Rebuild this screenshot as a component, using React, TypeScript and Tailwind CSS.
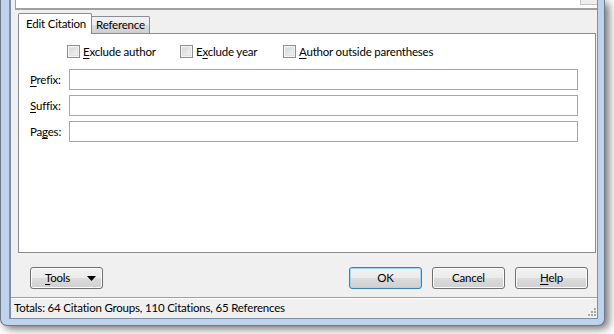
import React from "react";

const U = ({ children }: any) => <span className="underline underline-offset-[2px]">{children}</span>;

const CheckBox = ({ children, width }: any) => (
  <div className={`flex items-center gap-[3px] ${width}`}>
    <span className="w-[13px] h-[13px] shrink-0 border border-[#8e8f8f] bg-[linear-gradient(135deg,#d2d2d2,#f8f8f8)] shadow-[inset_0_0_0_1px_#f4f4f4,inset_0_0_0_2px_#e2e2e2]" />
    <span className="leading-[13px]">{children}</span>
  </div>
);

const Field = ({ children }: any) => (
  <div className="flex items-center h-[21px]">
    <span className="w-[39px] shrink-0">{children}</span>
    <div className="flex-1 h-[21px] mr-[17px] bg-white border border-[#a7a7a7]" />
  </div>
);

const grad = "bg-[linear-gradient(#f2f2f2,#ebebeb_50%,#dddddd_50%,#cfcfcf)]";

export default function App() {
  return (
    <div className="w-[614px] h-[334px] bg-white overflow-hidden font-['Lato',sans-serif] text-[11.5px] tracking-[-0.2px] text-black">
      <div className="w-[605px] h-[326px] border-x border-b border-[#6d7a88] rounded-b-[7px] bg-[#bfd4ec] pl-[8px] pr-[6px] pb-[6px] shadow-[4px_3px_9px_rgba(0,0,0,0.55)]">
        <div className="h-[319px] border-l-2 border-r border-b border-[#7f8fa2] bg-[#f0f0f0] flex flex-col">
          {/* bottom of control above */}
          <div className="h-[10px] ml-[4px] bg-white border-l border-b-2 border-[#a0a0a0] flex justify-end">
            <div className="w-[17px] h-[5px] bg-[#eeeeee] border-l border-b border-[#c4c4c4]" />
          </div>

          {/* tabs */}
          <div className="mt-[3px] h-[20px] ml-[7px] flex items-end">
            <div className="relative z-10 h-[21px] -mb-px w-[74px] pl-[7px] bg-white border-l border-t border-r border-[#898c95] rounded-t-[2px] flex items-center">
              Edit Citation
            </div>
            <div className={`h-[17px] w-[58px] pl-[4px] border-t border-r border-[#898c95] rounded-tr-[2px] ${grad} flex items-center`}>
              Reference
            </div>
          </div>

          {/* panel */}
          <div className="h-[220px] ml-[7px] mr-[1px] border border-[#898c95] bg-white flex flex-col pt-[11px] pl-[11px]">
            <div className="flex h-[13px] pl-[37px]">
              <CheckBox width="w-[113px]">
                <U>E</U>xclude author
              </CheckBox>
              <CheckBox width="w-[103px]">
                E<U>x</U>clude year
              </CheckBox>
              <CheckBox width="">
                <U>A</U>uthor outside parentheses
              </CheckBox>
            </div>
            <div className="mt-[11px] flex flex-col gap-[5px]">
              <Field>
                <U>P</U>refix:
              </Field>
              <Field>
                <U>S</U>uffix:
              </Field>
              <Field>
                Pa<U>g</U>es:
              </Field>
            </div>
          </div>

          {/* buttons */}
          <div className="mt-[14px] h-[22px] flex items-center pl-[19px] pr-[9px]">
            <div className={`h-[22px] w-[73px] rounded-[3px] border border-[#707070] shadow-[inset_0_0_0_1px_#fbfbfb] ${grad} flex items-center pl-[14px] pr-[6px]`}>
              <span className="flex-1">
                <U>T</U>ools
              </span>
              <svg width="9" height="5" viewBox="0 0 9 5">
                <path d="M0 0H9L4.5 5Z" fill="#000" />
              </svg>
            </div>
            <div className="flex-1" />
            <div className={`h-[22px] w-[73px] rounded-[3px] border border-[#3c7fb1] shadow-[inset_0_0_0_1px_#9fd9f7] ${grad} flex items-center justify-center`}>
              OK
            </div>
            <div className={`h-[22px] w-[73px] ml-[10px] rounded-[3px] border border-[#707070] shadow-[inset_0_0_0_1px_#fbfbfb] ${grad} flex items-center justify-center`}>
              Cancel
            </div>
            <div className={`h-[22px] w-[73px] ml-[10px] rounded-[3px] border border-[#707070] shadow-[inset_0_0_0_1px_#fbfbfb] ${grad} flex items-center justify-center`}>
              <span>
                <U>H</U>elp
              </span>
            </div>
          </div>

          {/* status bar */}
          <div className="mt-[8px] flex-1 border-t border-[#a0a0a0] shadow-[inset_0_1px_0_#ffffff] flex items-center justify-between pl-[3px] pr-[1px]">
            <span>Totals: 64 Citation Groups, 110 Citations, 65 References</span>
            <svg width="10" height="10" viewBox="0 0 10 10" className="self-end mb-[1px]">
              {[
                [8, 0],
                [8, 3],
                [5, 3],
                [8, 6],
                [5, 6],
                [2, 6],
              ].map(([x, y], i) => (
                <rect key={i} x={x} y={y + 1} width="2" height="2" fill="#a8a8a8" />
              ))}
            </svg>
          </div>
        </div>
      </div>
    </div>
  );
}
